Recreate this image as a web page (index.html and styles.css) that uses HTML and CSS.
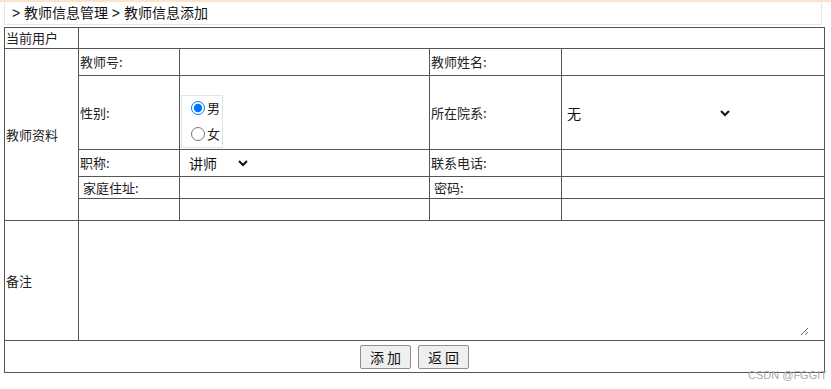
FILE: index.html
```html
<!DOCTYPE html>
<html lang="zh-CN">
  <head>
    <meta charset="UTF-8" />
    <title>教师信息添加</title>
    <link rel="stylesheet" href="styles.css">
  </head>
  <body>
    <div class="topline"></div>
    <div class="crumbs">&nbsp;&gt; 教师信息管理 &gt; 教师信息添加</div>

    <table class="form-table">
      <colgroup>
        <col class="c1" />
        <col class="c2" />
        <col class="c3" />
        <col class="c4" />
        <col class="c5" />
      </colgroup>
      <tr class="r-user">
        <td>当前用户</td>
        <td colspan="4"></td>
      </tr>
      <tr class="r-std">
        <td rowspan="5">教师资料</td>
        <td>教师号:</td>
        <td></td>
        <td>教师姓名:</td>
        <td></td>
      </tr>
      <tr class="r-sex">
        <td>性别:</td>
        <td class="radio-cell">
          <div class="radio-box">
            <label><input type="radio" name="sex" checked />男</label>
            <label><input type="radio" name="sex" />女</label>
          </div>
        </td>
        <td>所在院系:</td>
        <td>
          <select class="sel sel-dept">
            <option>无</option>
          </select>
        </td>
      </tr>
      <tr class="r-std">
        <td>职称:</td>
        <td>
          <select class="sel sel-title">
            <option>讲师</option>
          </select>
        </td>
        <td>联系电话:</td>
        <td></td>
      </tr>
      <tr class="r-small">
        <td>&nbsp;家庭住址:</td>
        <td></td>
        <td>&nbsp;密码:</td>
        <td></td>
      </tr>
      <tr class="r-small">
        <td></td>
        <td></td>
        <td></td>
        <td></td>
      </tr>
      <tr class="r-note">
        <td>备注</td>
        <td colspan="4" class="note-cell"><textarea class="note"></textarea></td>
      </tr>
      <tr class="r-btn">
        <td colspan="5" class="btns">
          <button>添 加</button>
          <button>返 回</button>
        </td>
      </tr>
    </table>

    <div class="mark">CSDN @FGGIT</div>
  </body>
</html>
```

FILE: styles.css
```css
body {
  margin: 0;
  font-family: "Noto Sans CJK SC", "Noto Sans", sans-serif;
  font-size: 13px;
  color: #222;
  background: #fff;
  position: relative;
  width: 831px;
  height: 389px;
}

.topline {
  height: 2px;
  background: #fde3c8;
}

.crumbs {
  height: 23px;
  width: 818px;
  margin-left: 4px;
  border: 1px solid #e6e6e6;
  border-top: none;
  box-sizing: border-box;
  font-family: "Liberation Sans", "Noto Sans CJK SC", sans-serif;
  font-size: 14px;
  line-height: 23px;
  padding-left: 3px;
  color: #111;
}

.form-table {
  margin: 2px 0 0 4px;
  width: 820px;
  border-collapse: collapse;
  table-layout: fixed;
  border: 1px solid #333;
}

.c1 { width: 74px; }
.c2 { width: 101px; }
.c3 { width: 250px; }
.c4 { width: 132px; }
.c5 { width: 263px; }

.form-table td {
  border: 1px solid #555;
  padding: 0 1px;
  vertical-align: middle;
  line-height: 16px;
  white-space: nowrap;
}

.r-user { height: 21px; }
.r-std { height: 27px; }
.r-sex { height: 74px; }
.r-small { height: 22px; }
.r-note { height: 120px; }
.r-btn { height: 32px; }

.form-table td.radio-cell {
  vertical-align: bottom;
  padding-bottom: 1px;
}

.radio-box {
  display: flex;
  flex-direction: column;
  width: 42px;
  height: 53px;
  border: 1px solid #e2e2e2;
  box-sizing: border-box;
  padding: 3px 0 0 8px;
  gap: 8px;
}

.radio-box label {
  display: flex;
  align-items: center;
  font-size: 13px;
  line-height: 18px;
}

.radio-box input {
  margin: 0 2px 0 1px;
  width: 14px;
  height: 14px;
}

.sel {
  border: none;
  background: transparent;
  font-family: inherit;
  font-size: 14px;
  color: #111;
  outline: none;
  padding: 0 4px;
}

.sel-title { width: 70px; }
.sel-dept { width: 170px; padding-left: 0; }

.note-cell {
  padding: 0;
  vertical-align: top;
}

.note {
  display: block;
  width: 729px;
  height: 110px;
  border: none;
  outline: none;
  box-sizing: border-box;
  font-family: inherit;
}

.btns {
  text-align: center;
}

.btns button {
  font-family: inherit;
  font-size: 14px;
  height: 24px;
  width: 51px;
  padding: 0;
  margin: 0 2px;
  color: #111;
  background: #efefef;
  border: 1px solid #8f8f8f;
  border-radius: 2px;
}

.mark {
  position: absolute;
  left: 748px;
  top: 369px;
  font-family: "Liberation Sans", Arial, sans-serif;
  font-size: 11px;
  color: #aaa;
}
```
